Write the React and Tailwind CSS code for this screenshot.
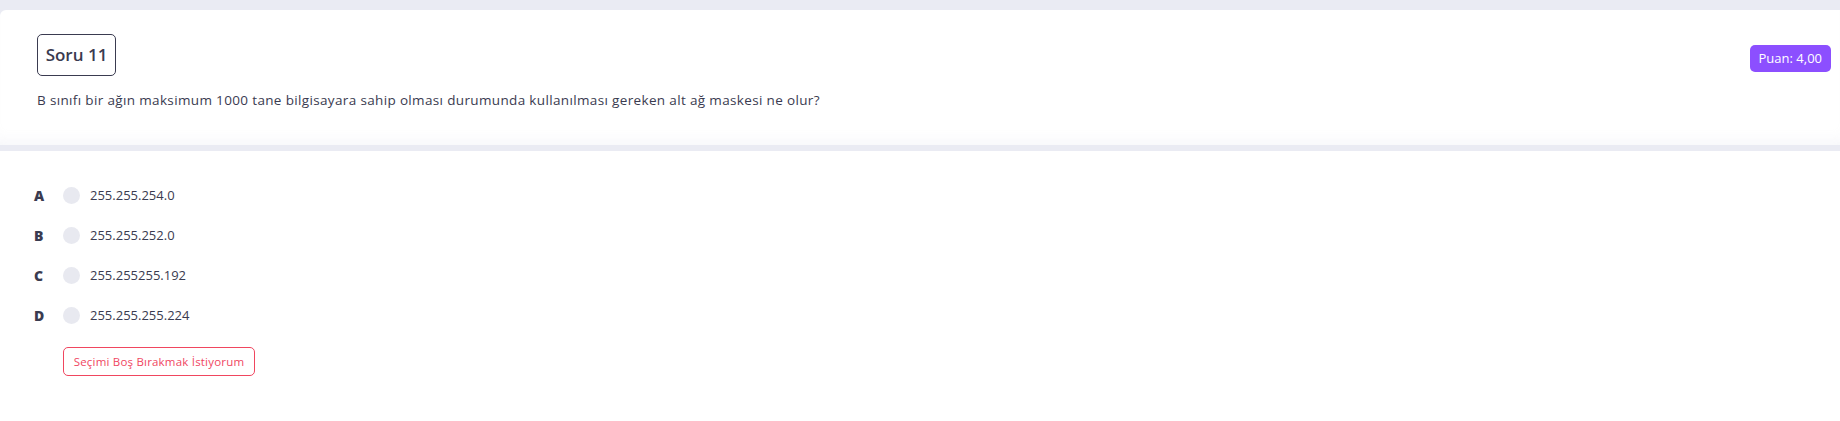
import React, { useState } from 'react';

const options = [
  { key: 'A', label: '255.255.254.0' },
  { key: 'B', label: '255.255.252.0' },
  { key: 'C', label: '255.255255.192' },
  { key: 'D', label: '255.255.255.224' },
];

const App = () => {
  const [selected, setSelected] = useState(null);

  return (
    <div
      className="min-h-[421px] bg-[#eaebf3] pt-[10px] text-[#3a3b50]"
      style={{ fontFamily: '"Open Sans", "Noto Sans", sans-serif' }}
    >
      <div className="h-[135px] rounded-tl-[6px] bg-white px-[37px] pt-[24px] shadow-[0_-14px_16px_-12px_rgba(234,235,243,0.55)_inset]">
        <div className="flex items-start justify-between">
          <div className="flex h-[42px] w-[79px] items-center justify-center rounded-[5px] border border-[#3a3b50] text-[17px] font-semibold">
            Soru 11
          </div>
          <div className="-mr-[28px] mt-[11px] flex h-[27px] items-center rounded-[5px] bg-[#8c4fff] px-[9px] text-[13px] text-white">
            Puan: 4,00
          </div>
        </div>
        <p className="mt-[14px] text-[13.5px] leading-[20px] tracking-[0.35px]">
          B sınıfı bir ağın maksimum 1000 tane bilgisayara sahip olması durumunda kullanılması gereken alt ağ maskesi ne olur?
        </p>
      </div>

      <div className="mt-[6px] h-[270px] bg-white px-[34px] pt-[36px]">
        <div className="flex flex-col gap-[23px]">
          {options.map((opt) => (
            <label
              key={opt.key}
              className="flex h-[17px] cursor-pointer items-center"
              onClick={() => setSelected(opt.key)}
            >
              <span className="w-[29px] text-[14px] font-extrabold">{opt.key}</span>
              <span
                className={`h-[17px] w-[17px] rounded-full ${
                  selected === opt.key ? 'bg-[#8c4fff]' : 'bg-[#e8e9f0]'
                }`}
              />
              <span className="ml-[10px] text-[13px]">{opt.label}</span>
            </label>
          ))}
        </div>
        <button
          onClick={() => setSelected(null)}
          className="ml-[29px] mt-[23px] flex h-[29px] w-[192px] items-center justify-center rounded-[5px] border border-[#f0465f] text-[11.5px] tracking-[0.2px] text-[#f0465f]"
        >
          Seçimi Boş Bırakmak İstiyorum
        </button>
      </div>
    </div>
  );
};

export default App;
